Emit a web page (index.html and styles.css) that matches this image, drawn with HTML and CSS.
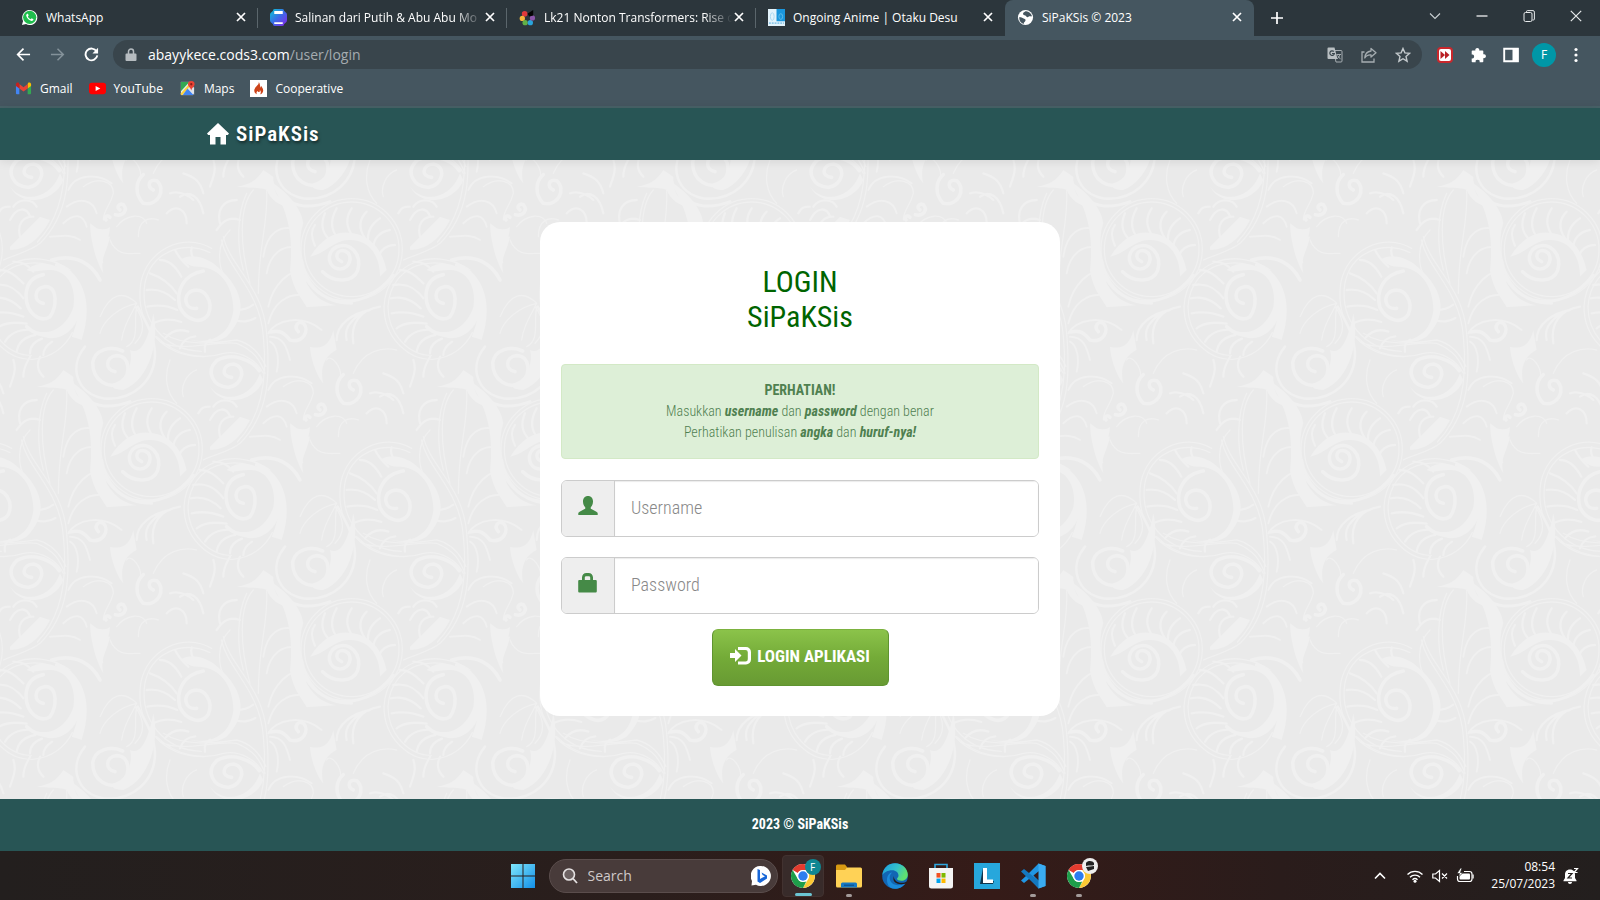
FILE: index.html
```html
<!DOCTYPE html>
<html lang="id">
<head>
<meta charset="utf-8">
<title>SiPaKSis © 2023</title>
<meta name="viewport" content="width=device-width, initial-scale=1">
<link rel="stylesheet" href="styles.css">
</head>
<body>
<svg class="defs" width="0" height="0" aria-hidden="true">
  <defs>
    <symbol id="i-x" viewBox="0 0 10 10"><path d="M1 1l8 8M9 1l-8 8" fill="none" stroke="currentColor" stroke-width="1.7"/></symbol>
    <symbol id="i-chrome" viewBox="0 0 48 48">
      <circle cx="24" cy="24" r="22" fill="#fff"/>
      <path d="M24 2a22 22 0 0 1 19 11H24a11 11 0 0 0-9.500 5.500L4.900 13A22 22 0 0 1 24 2z" fill="#e33b2e"/>
      <path d="M43 13a22 22 0 0 1-19 33l9.500-16.500A11 11 0 0 0 33.500 18.500L30 13z" fill="#fcc934"/>
      <path d="M24 46A22 22 0 0 1 4.900 13l9.600 16.500A11 11 0 0 0 24 35l6-1z" fill="#1e9e4a"/>
      <circle cx="24" cy="24" r="11" fill="#fff"/><circle cx="24" cy="24" r="8.700" fill="#2d7df0"/>
    </symbol>
    <!-- One repeat of the damask, drawn at three times its printed size -->
    <g id="motif" fill="none" stroke="#f0f0f0" stroke-linecap="round" stroke-linejoin="round">
      <g fill="#f0f0f0" stroke="none">
        <path d="M1195 60c50 30 100 80 105 130-20 60 0 120 10 180 30 50 60 60 90 66l-90 6c-16-30-40-50-50-110 10-90 0-180-65-272z"/>
        <path d="M120 560c40 10 60-10 70-50l10 60c-40 20-50 60-40 100-20-20-40-80-40-110zM500 680c40-6 60-20 80-50l30 20c0 60 20 70 70 90-40 10-80-20-90-50-20-10-60-4-90-10zM70 800c20 10 40 10 50 0 0 40-30 70-20 110-20 0-30-70-30-110zM660 190c30 20 40 40 60 40-10 50-30 60-20 110-20-30-40-100-40-150z"/>
        <path d="M545 300c90 30 130 120 90 240l-30-10c40-90 20-170-60-230zM780 570c40 20 60-60 70-110 20 80-10 200-90 230-30 0-40-10-30-20 40-10 60-60 50-100z"/>
        <path d="M930 300c30-20 70-10 100 10 90 70 110 150 40 220-30 20-70 20-110 10 60 10 120-10 130-90 0-60-30-130-110-130-20 0-30-10-50-20zM470 330c30-30 80-20 110 0 40 20 60 90 50 130-20 70-90 100-140 50 50 20 100-10 120-70 10-60-20-110-70-110-30 0-50 10-70 0z"/>
        <path d="M120 290c40-60 80-80 130-70 60 10 90 60 100 110l-20 20c0-60-30-110-90-110-50 0-70 40-120 50zM1020 680c40 50 120 40 150-40l10 20c-20 60-120 90-160 20zM1020 860c30-30 60-60 90-90l30 10c-20 40-60 90-120 90z"/>
      </g>
      <g stroke-width="4">
        <circle cx="245" cy="268" r="152"/><circle cx="245" cy="268" r="142"/>
        <path d="M600 330C500 260 350 300 342 440c0 90 70 160 145 158 60-4 100-40 120-80M590 340C500 276 362 310 354 440c0 80 60 146 130 146"/>
        <path d="M1025 265C940 215 830 270 812 370c-17 130 68 220 188 220M1020 278c-80-40-180 0-196 96-14 110 60 196 170 200"/>
        <path d="M860 530c60 60 140 70 200 50 50-10 100 20 120 60M870 545c60 35 170-5 230 5 50 20 70 50 85 90M880 520c60 40 150 30 220 20 40 10 70 40 88 80"/>
        <path d="M1150 90c-45 50-40 170-10 280M1190 90c5 110-25 160-25 310M1080 210c-40 40-40 110-10 150M1130 100c-30 60-30 160-10 230"/>
        <path d="M800 430c-40-40-80-30-110 40M800 430c-50 10-100 50-110 90M800 430c-20 40-40 70-45 110M800 440c-10 50 10 100-30 120M795 440c30 40 30 80 0 110"/>
        <path d="M250 640c30-70 90-80 130-70M205 830c0-50 30-60 60-50M210 660c10-40-30-80-40-60M640 80c40-30 90-20 90 20-10 40-30 50-30 80M740 200c30-40 80-40 90-10M720 240c20 50 60 40 90 40M900 600c-20 50-10 100 20 130M980 630c-30 10-50 50-40 80"/>
      </g>
      <g stroke-width="6">
        <path d="M1060 230c20 90 120 150 130 290 10 120 10 240-80 330-30 25-80 35-110 50M1054 240c20 90 116 150 126 290 10 100 6 230-78 316" stroke-width="4"/>
        <path d="M1180 290c10-70 50-100 105-80M1190 340c10-60 50-90 100-75M1195 440c15-70 65-110 105-110M1195 490c15-60 55-90 105-85M1195 520c20-40 100-60 160-10M1200 530c40 0 50 30 60 70M1200 545c20 10 30 50 20 90M1195 690c20-50 90-50 130-20M1190 740c40-30 80-20 90 20M1180 790c30-30 60-30 70 10M1140 830c30 0 60-10 90 10"/>
      </g>
      <g stroke-width="11">
        <path d="M215 305c-25-10-15-40 10-32 28 12 14 55-16 54-36-2-42-50-10-66 40-18 78 20 64 70-14 36-70 40-105 4"/>
        <path d="M520 430c-30-4-30-46 5-50 40-2 35 62 15 90-30 20-70-10-72-60 0-40 20-60 52-66"/>
        <path d="M735 635c-30-5-30-45 5-48 40 0 44 55 15 80-40 24-88-6-87-60 7-36 50-52 90-34"/>
        <path d="M980 445c-36 6-44-40-15-52 40-12 66 32 50 70-20 32-66 18-85-20-14-50 10-100 70-110"/>
        <path d="M1085 652c-34-2-28-38 5-40 40 6 30 64-15 70-45-2-70-46-35-80 46-26 104-4 128 30"/>
        <path d="M1285 515c-15-15 0-35 15-25 20 20 0 60-40 50-20-24-30-30-60-24"/>
        <path d="M250 690c-20-10-15-35 10-28 30 26 4 78-40 68-30-30-20-70 0-86M150 750c-12-6-4-22 10-16 14 16 0 36-24 30M108 780c-8-8 4-18 12-8"/>
        <path d="M645 560c-50 60-25 140 55 155 90 10 155-55 155-135-2-50-24-90-52-140" stroke-width="8"/>
        <path d="M600 650c20 70 90 110 180 75M105 350c55 100 185 100 265-5M95 300c10 70 60 130 150 130" stroke-width="9"/>
        <path d="M470 500c50 50 130 20 150-50 15-60-25-120-60-135M545 300c70-20 120 10 145 60"/>
        <path d="M330 440c-60 10-90 50-80 110M300 450c-50 10-100 40-100 90M270 460c-20 20-50 40-40 80" stroke-width="7"/>
      </g>
      <!-- feathering inside the scrolls -->
      <g stroke-width="7">
        <path d="M165 160c-15 35-5 60 10 75M200 145c-20 35-15 65 0 85M245 145c-20 30-15 60 5 85M290 155c-25 25-25 50-5 80M330 175c-30 20-40 45-35 75M360 210c-30 5-50 25-50 55M375 255c-25 0-45 15-50 40M135 195c-15 20-10 40 0 62"/>
        <path d="M390 330c30 0 50 20 70 40M370 375c30-5 60 0 90 40M362 415c30-6 60 0 90 30M365 460c30-6 60-4 95 10M380 505c20-16 50-20 90-14M405 545c14-24 40-36 75-36M440 575c4-24 20-44 56-50M480 580c0-20 14-36 36-44M430 305c30 0 50 16 60 30M520 585c0-16 10-30 26-40"/>
        <path d="M840 340c30 10 60 30 80 60M830 390c30-4 60 6 85 30M832 440c30-6 60-4 90 10M850 490c26-14 54-14 84-4M885 535c16-20 40-30 70-20M930 565c8-22 20-34 46-36M870 300c30 0 50 24 64 50M915 270c10 20 24 36 40 50M965 262c-6 20 4 34 16 44M1005 575c-4-20 4-30 16-36M1100 450c20 0 34-4 50-16M1096 480c20 8 44 4 60-6"/>
        <path d="M450 790c-10-40 10-70 50-70M440 810c20-30 40-40 70-30M330 710c30-20 60 0 70 50M300 700c30-10 60 10 70 20M290 760c30-30 60-10 60 30M400 700c-10-40-30-50-60-60M420 680c10-30 20-50 10-80M460 650c0-30 10-40 20-60M520 650c-20-20-20-40-10-60M1030 740c20-30 60-20 70 0M1020 780c20-40 50-40 60-10M1050 830c-10-40 10-60 40-60M985 760c10-20 20-20 34-20"/>
      </g>
    </g>
    <pattern id="damask" width="400" height="400" patternUnits="userSpaceOnUse">
      <rect width="400" height="400" fill="#eaeaea"/>
      <g transform="translate(270) scale(.3333)">
        <use href="#motif" x="-1200" y="-1200"/><use href="#motif" y="-1200"/>
        <use href="#motif" x="-1800" y="-600"/><use href="#motif" x="-600" y="-600"/>
        <use href="#motif" x="-1200"/><use href="#motif"/>
        <use href="#motif" x="-1800" y="600"/><use href="#motif" x="-600" y="600"/>
      </g>
    </pattern>
  </defs>
</svg>

<header class="browser">
  <div class="tabs">
    <div class="tab">
      <svg class="fav" viewBox="0 0 18 18"><path d="M1 17l1.200-4.200A8 8 0 1 1 5.300 16z" fill="#fff"/><circle cx="9.200" cy="8.800" r="7" fill="#1fbd4d"/><path d="M6.500 5c-.8.400-1.200 1.400-.9 2.400.8 2.600 3 4.600 5.600 5.200 1 .1 2-.7 2-1.700l-1.900-1-1 1c-1.400-.5-2.500-1.600-3-2.900l.8-1-.7-1.900z" fill="#fff"/></svg>
      <button class="tab-title">WhatsApp</button>
      <button class="tab-x" aria-label="Close tab"><svg><use href="#i-x"/></svg></button>
    </div>
    <div class="tab">
      <svg class="fav" viewBox="0 0 18 18"><defs><linearGradient id="gp" x1="0" y1="0" x2="1" y2="1"><stop offset="0" stop-color="#06c8d2"/><stop offset=".5" stop-color="#3c6ae8"/><stop offset="1" stop-color="#8a22e8"/></linearGradient></defs><path d="M5 0h8a2 2 0 0 1 2 2l1.500 1.500A3 3 0 0 1 18 6v6a3 3 0 0 1-1.500 2.500L15 16a2 2 0 0 1-2 2H5a2 2 0 0 1-2-2l-1.500-1.500A3 3 0 0 1 0 12V6a3 3 0 0 1 1.500-2.500L3 2a2 2 0 0 1 2-2z" fill="url(#gp)"/><path d="M4.500 2h9v3.200h-9zM4.500 14h9v2h-9z" fill="#fff"/></svg>
      <button class="tab-title fade">Salinan dari Putih &amp; Abu Abu Mo</button>
      <button class="tab-x" aria-label="Close tab"><svg><use href="#i-x"/></svg></button>
    </div>
    <div class="tab">
      <svg class="fav" viewBox="0 0 18 18"><circle cx="6" cy="5" r="3" fill="#e0393b"/><circle cx="3.500" cy="10" r="2.800" fill="#f4b63c"/><circle cx="6.500" cy="14.500" r="2.800" fill="#62b146"/><circle cx="12" cy="14.500" r="2.800" fill="#2aa5dd"/><circle cx="14.200" cy="9.500" r="2.800" fill="#8a56a8"/><path d="M9 5l6-4v6l-4 1z" fill="#050505"/><circle cx="9.300" cy="9.500" r="1.800" fill="#2c363c"/></svg>
      <button class="tab-title fade">Lk21 Nonton Transformers: Rise o</button>
      <button class="tab-x" aria-label="Close tab"><svg><use href="#i-x"/></svg></button>
    </div>
    <div class="tab last">
      <svg class="fav" viewBox="0 0 18 18"><path d="M0 0h18v18H0z" fill="#e3f3fb"/><path d="M9 0h9v13H9z" fill="#1a96dc"/><path d="M1 15h16" stroke="#8fc9ea" stroke-width="2" stroke-dasharray="2 1"/><g fill="none" stroke-width="1"><ellipse cx="4.500" cy="8" rx="2" ry="4" stroke="#a9d9f1"/><ellipse cx="13.500" cy="8" rx="2" ry="3" stroke="#5fbcea"/></g></svg>
      <button class="tab-title">Ongoing Anime | Otaku Desu</button>
      <button class="tab-x" aria-label="Close tab"><svg><use href="#i-x"/></svg></button>
    </div>
    <div class="tab active">
      <svg class="fav" viewBox="0 0 18 18"><circle cx="9" cy="9" r="8" fill="#fff"/><path d="M2.500 8.500c2 0 3 1 4.500 1.500 2 .6 2.500 1.500 1.800 2.800-.6 1.200-1.800 1.200-1.600 3C4 15 2 12 2.500 8.500zM9 2.500c-1.500 1-3 1.500-2.500 3C7 7 9 6 9.500 7.500s2 1.500 3 .5 2.500.5 3.300-.5C15 4.500 12 2 9 2.500z" fill="#45555f"/></svg>
      <button class="tab-title">SiPaKSis © 2023</button>
      <button class="tab-x" aria-label="Close tab"><svg><use href="#i-x"/></svg></button>
    </div>
    <button class="newtab" aria-label="New tab"><svg viewBox="0 0 14 14"><path d="M7 0v14M0 7h14" stroke="#fff" stroke-width="2"/></svg></button>
    <div class="winbtns">
      <button aria-label="Search tabs"><svg viewBox="0 0 12 12"><path d="M1 3.500l5 5 5-5" fill="none" stroke="#ccd2d5" stroke-width="1.100"/></svg></button>
      <button aria-label="Minimize"><svg viewBox="0 0 12 12"><path d="M.5 6h11" stroke="#fff" stroke-width="1.200"/></svg></button>
      <button aria-label="Restore"><svg viewBox="0 0 12 12"><rect x="1" y="2.500" width="8" height="9" rx="1.500" fill="none" stroke="#e8ebec"/><path d="M3.500 2V1.500A1 1 0 0 1 4.500.6H10a1.500 1.500 0 0 1 1.400 1.500V9a1 1 0 0 1-1 1H9.500" fill="none" stroke="#e8ebec"/></svg></button>
      <button aria-label="Close"><svg viewBox="0 0 12 12"><path d="M.8.8l10.400 10.400M11.200.8L.8 11.200" stroke="#e8ebec" stroke-width="1.200"/></svg></button>
    </div>
  </div>

  <div class="toolbar">
    <button class="tool" aria-label="Back"><svg viewBox="0 0 16 16"><path d="M15 8H2M8 1.800L1.800 8 8 14.200" fill="none" stroke="#fff" stroke-width="1.800"/></svg></button>
    <button class="tool" aria-label="Forward"><svg viewBox="0 0 16 16"><path d="M1 8h13M8 1.800L14.200 8 8 14.200" fill="none" stroke="#84929a" stroke-width="1.600"/></svg></button>
    <button class="tool" aria-label="Reload"><svg viewBox="0 0 16 16"><path d="M13.400 4.700A6.300 6.300 0 1 0 14.200 9" fill="none" stroke="#fff" stroke-width="2"/><path d="M15 .8v6H9z" fill="#fff"/></svg></button>
    <form class="omnibox">
      <svg class="lock" viewBox="0 0 12 14"><path d="M1.500 5.500h9a1 1 0 0 1 1 1V12a1 1 0 0 1-1 1h-9a1 1 0 0 1-1-1V6.500a1 1 0 0 1 1-1z" fill="#b6bcc0"/><path d="M3.500 6V3.500a2.500 2.500 0 0 1 5 0V6" fill="none" stroke="#b6bcc0" stroke-width="1.500"/></svg>
      <span class="url">abayykece.cods3.com<span>/user/login</span></span>
      <button type="button" aria-label="Translate"><svg viewBox="0 0 16 16"><path d="M6.500 3.500h7.500a1 1 0 0 1 1 1V14a1 1 0 0 1-1 1H9z" fill="none" stroke="#a6adb1"/><path d="M1.500.5h6L10.500 12h-9a1 1 0 0 1-1-1V1.500a1 1 0 0 1 1-1z" fill="#b9bfc2"/><path d="M6.800 4.500A2.300 2.300 0 1 0 7.400 6.500H5" fill="none" stroke="#3a464d" stroke-width="1.200"/><path d="M9.500 7.500H14M12.800 7.500c-.4 2-1.500 3.500-3 4.500M10.500 8.500l3 3.700" fill="none" stroke="#a6adb1"/></svg></button>
      <button type="button" aria-label="Share"><svg viewBox="0 0 16 16"><path d="M3.500 5H1v10h12v-3.500" fill="none" stroke="#a6adb1" stroke-width="1.300"/><path d="M10 1.500l5 4.300-5 4.200V7.800C7 7.600 5 8.600 3.800 11 4 7.500 6 4.500 10 4z" fill="none" stroke="#a6adb1" stroke-width="1.300" stroke-linejoin="round"/></svg></button>
      <button type="button" aria-label="Bookmark"><svg viewBox="0 0 16 16"><path d="M8 1.500l1.900 4.400 4.800.4L11 9.500l1.100 4.700L8 11.700l-4.100 2.500L5 9.500 1.300 6.300l4.800-.4z" fill="none" stroke="#c3c9cc" stroke-width="1.400"/></svg></button>
    </form>
    <button class="ext" aria-label="Video speed extension"><svg viewBox="0 0 16 16"><rect x="1" y="1" width="14" height="14" rx="3" fill="#fff" stroke="#c9272c" stroke-width="2"/><path d="M3.500 4v8l4.500-4zM8 4v8l4.500-4z" fill="#b91f24"/></svg></button>
    <button class="ext" aria-label="Extensions"><svg viewBox="0 0 16 16"><path d="M2.500 3.500H5.400a2 2 0 1 1 3.800 0h3.300a.8.800 0 0 1 .8.800v3a2 2 0 1 1 0 3.800v3.400a.8.800 0 0 1-.8.800H9.600a2 2 0 1 0-3.900 0H2.500a.8.800 0 0 1-.8-.8v-3a2 2 0 1 0 0-3.900V4.300a.8.800 0 0 1 .8-.8z" fill="#fff"/></svg></button>
    <button class="ext" aria-label="Side panel"><svg viewBox="0 0 16 16"><path d="M1.200 1.700h13.600v12.600H1.200z" fill="none" stroke="#fff" stroke-width="1.900"/><path d="M9.500 1h6v14h-6z" fill="#fff"/></svg></button>
    <button class="avatar">F</button>
    <button class="ext menu" aria-label="Menu"><svg viewBox="0 0 16 16"><g fill="#fff"><circle cx="8" cy="2.500" r="1.600"/><circle cx="8" cy="8" r="1.600"/><circle cx="8" cy="13.500" r="1.600"/></g></svg></button>
  </div>

  <nav class="bookmarks">
    <a href="#"><svg class="fav" viewBox="0 0 18 18"><path d="M1 4.500v9.500a1 1 0 0 0 1 1h2.600V8z" fill="#4285f4"/><path d="M17 4.500v9.500a1 1 0 0 1-1 1h-2.600V8z" fill="#34a853"/><path d="M13.400 4.300V9L17 6.300V4.500c0-1.800-2-2.300-3-1.500z" fill="#fbbc04"/><path d="M4.600 9V4.300L9 7.600l4.400-3.300V9L9 12.300z" fill="#ea4335"/><path d="M1 4.500v1.800L4.600 9V4.300L4 3C3 2.200 1 2.700 1 4.500z" fill="#c5221f"/></svg>Gmail</a>
    <a href="#"><svg class="fav" viewBox="0 0 18 18"><rect x="0" y="3" width="18" height="12" rx="3" fill="#f00"/><path d="M7 6.300v5.400L12 9z" fill="#fff"/></svg>YouTube</a>
    <a href="#"><svg class="fav" viewBox="0 0 18 18"><path d="M2 2h13v14H2z" fill="#e9ecef"/><path d="M2 2h9L2 12z" fill="#34a853"/><path d="M2 14l9-10 2 2-9.500 10H2z" fill="#fbd13d"/><path d="M9 9l6.500 7H4z" fill="#4285f4"/><path d="M9.500 9L16 15.500V8l-4-2z" fill="#dfe3e8"/><path d="M13 1a3.500 3.500 0 0 1 3.500 3.500C16.500 7 13.600 8 13 11c-.6-3-3.500-4-3.500-6.500A3.500 3.500 0 0 1 13 1z" fill="#ea4335"/><circle cx="13" cy="4.500" r="1.200" fill="#8c1d18"/></svg>Maps</a>
    <a href="#"><svg class="fav" viewBox="0 0 18 18"><path d="M0 0h18v18H0z" fill="#fff"/><path d="M9.200 2.500c.8 3-4.700 4.800-4.700 8.600 0 2.200 1.300 3.600 3 4.100-1-1.300-.8-2.700.5-3.500.4 1 1 1.200 1.900.9.700-.4.700-1.200.3-2 1.500.8 1.800 3.200.4 4.600 2-.5 3.400-2.200 3.400-4.200 0-2.200-1.600-3-1.800-4.700-.6.500-.7 1.200-.5 1.900C10.400 7.400 11 4 9.200 2.500z" fill="#cc4319"/></svg>Cooperative</a>
  </nav>
</header>

<div class="navbar">
  <a class="brand" href="#"><svg viewBox="0 0 24 24"><path d="M12 1l11 10.500-1.200 1.500H20v9.500h-5.500V15h-5v7.500H4V13H2.200L1 11.500z" fill="#fff"/></svg>SiPaKSis</a>
</div>

<main class="page">
  <svg class="wall" width="100%" height="100%" aria-hidden="true"><rect width="100%" height="100%" fill="url(#damask)"/></svg>
  <section class="card">
    <h1>LOGIN<br>SiPaKSis</h1>
    <div class="notice">
      <strong>PERHATIAN!</strong><br>
      Masukkan <b><i>username</i></b> dan <b><i>password</i></b> dengan benar<br>
      Perhatikan penulisan <b><i>angka</i></b> dan <b><i>huruf-nya!</i></b>
    </div>
    <form class="login">
      <div class="group">
        <label for="user" aria-label="Username"><svg viewBox="0 0 20 20"><path d="M10 0c3 0 5 2.200 5 5.500 0 2.500-.9 4.300-2 5.500-.6.700-.4 1.700.4 2.100l5 2.600c.9.500 1.300 1 1.300 1.800V19H.3v-1.500c0-.8.400-1.300 1.300-1.800l5-2.600c.8-.4 1-1.400.4-2.100-1.100-1.200-2-3-2-5.500C5 2.200 7 0 10 0z"/></svg></label>
        <input id="user" type="text" placeholder="Username">
      </div>
      <div class="group">
        <label for="pass" aria-label="Password"><svg viewBox="0 0 20 20"><path d="M1.500 7H4V4.500C4 2 5.800 0 8.500 0h2C13.200 0 15 2 15 4.500V7h2.500c.8 0 1.300.5 1.300 1.300v10c0 .8-.5 1.200-1.300 1.200h-16c-.8 0-1.300-.4-1.300-1.200v-10C.2 7.500.7 7 1.500 7zm5.300 0h5.400V4.700c0-.8-.5-1.400-1.400-1.400H8.200c-.9 0-1.400.6-1.400 1.400z"/></svg></label>
        <input id="pass" type="password" placeholder="Password">
      </div>
      <button class="submit" type="button"><svg viewBox="0 0 21 20"><path d="M0 7h5V3l6.500 6.500L5 16v-4H0z"/><path d="M8 1h8a5 5 0 0 1 5 5v7.500a5 5 0 0 1-5 5H8v-3h7.500a2.300 2.300 0 0 0 2.300-2.300V6.300A2.300 2.300 0 0 0 15.500 4H8z"/></svg>LOGIN APLIKASI</button>
    </form>
  </section>
</main>

<footer class="foot">2023 © SiPaKSis</footer>

<div class="taskbar">
  <div class="spacer"></div>
  <div class="apps">
    <button class="start" aria-label="Start"><svg viewBox="0 0 24 24"><defs><linearGradient id="gw" gradientUnits="userSpaceOnUse" x1="0" y1="0" x2="24" y2="24"><stop offset="0" stop-color="#7fe6fb"/><stop offset="1" stop-color="#128fe8"/></linearGradient></defs><path d="M0 0h11.500v11.500H0zM12.500 0H24v11.500H12.500zM0 12.500h11.500V24H0zM12.500 12.500H24V24H12.500z" fill="url(#gw)"/></svg></button>
    <div class="search">
      <svg class="lens" viewBox="0 0 16 16"><circle cx="7" cy="6.500" r="5.500" fill="#6d6262" stroke="#e6e2e2" stroke-width="1.600"/><path d="M11 10.500l4 4.500" stroke="#e6e2e2" stroke-width="1.800"/></svg>
      <input type="text" placeholder="Search" aria-label="Search">
      <svg class="bing" viewBox="0 0 20 20"><path d="M10 0a10 10 0 1 1-5 18.700L.5 19.500 1 15A10 10 0 0 1 10 0z" fill="#fff"/><path d="M6.500 3l2.500 1v9l5-2.800-2.400-1.200L10.500 6.500 16 9.500v3L9 17l-2.500-1.500z" fill="#1766d8"/></svg>
    </div>
    <button class="app current" aria-label="Chrome"><svg viewBox="0 0 48 48"><use href="#i-chrome"/></svg><span class="badge">F</span></button>
    <button class="app run" aria-label="File Explorer"><svg viewBox="0 0 26 26"><path d="M0 3a1.500 1.500 0 0 1 1.500-1.500H9L11 4v5H0z" fill="#d99a12"/><path d="M0 7h9l2-2.500h13.500A1.500 1.500 0 0 1 26 6v17a1.500 1.500 0 0 1-1.500 1.500h-23A1.500 1.500 0 0 1 0 23z" fill="#ffd256"/><path d="M5 24.500V21a1.500 1.500 0 0 1 1.500-1.500h13A1.500 1.500 0 0 1 21 21v3.500z" fill="#1679c4"/><path d="M8 21.500h10v1.500H8z" fill="#0d5796"/></svg></button>
    <button class="app" aria-label="Edge"><svg viewBox="0 0 26 26"><defs><linearGradient id="ge" x1="0" y1="0" x2="1" y2=".4"><stop offset="0" stop-color="#1b9de2"/><stop offset=".6" stop-color="#35c1c8"/><stop offset="1" stop-color="#5fe070"/></linearGradient></defs><circle cx="13" cy="13" r="12.800" fill="#1266b4"/><path d="M.3 12C1.500 4 7 .2 13 .2 20.500.2 25.800 6 25.800 11.500c0 4-3 6.300-6.500 6.300-2.500 0-4.300-.9-4.300-2 0-.8 1.500-1.300 1.500-3.300 0-3-2.700-5.300-6.300-5.300C5.500 7.200 1.800 9.500.3 12z" fill="url(#ge)"/><path d="M10 9.500c-5 5-1.500 12.500 6 12.800 3 0 5.500-1 7.500-2.300C21 24 17 25.800 13 25.800 7 25.800 5 21 5 17c0-4 2-7 5-7.500z" fill="#1b8bdc"/><path d="M12 13c-.5 4 3 7 8 6.800 2-.1 3.500-.6 5-1.400l-1 2C18 22.500 9 20.500 12 13z" fill="#231a1a"/></svg></button>
    <button class="app" aria-label="Microsoft Store"><svg viewBox="0 0 26 26"><path d="M7 6V1.500h12V6" fill="none" stroke="#2fa7df" stroke-width="1.600"/><path d="M1 5h24v18a2.500 2.500 0 0 1-2.500 2.500h-19A2.500 2.500 0 0 1 1 23z" fill="#f4f4f4"/><path d="M8.500 10h4v4.600h-4z" fill="#f25022"/><path d="M13.500 10h4v4.600h-4z" fill="#7fba00"/><path d="M8.500 15.600h4V20h-4z" fill="#00a4ef"/><path d="M13.500 15.600h4V20h-4z" fill="#ffb900"/></svg></button>
    <button class="app" aria-label="L app"><svg viewBox="0 0 26 26"><path d="M0 0h26v26H0z" fill="#27a7dc"/><path d="M6 21L9 5v13h11l-1 3z" fill="#12354b"/><path d="M9 5h4v11.500h6V20H9z" fill="#fff"/></svg></button>
    <button class="app run" aria-label="Visual Studio Code"><svg viewBox="0 0 26 26"><path d="M18.500.5L25.500 3v20l-7 2.500L9 15l3-4 7 7V8L4 20l-3-2.500L6 13z" fill="#2196e3"/><path d="M1 8.500L4 6l15 12v7.500z" fill="#1478bf"/><path d="M18.500.5L25.500 3v20l-7 2.500z" fill="#3aacf2"/></svg></button>
    <button class="app run" aria-label="Chrome profile"><svg viewBox="0 0 48 48"><use href="#i-chrome"/></svg><span class="badge photo"><svg viewBox="0 0 16 16"><path d="M4 5c2-3 7-2 8 0v2c-2 1-5 0-8 1zM4 9l8-1v3l-6 2z" fill="#222"/></svg></span></button>
  </div>
  <div class="tray">
    <svg class="ic" viewBox="0 0 16 16"><path d="M3 10.500l5-5 5 5" fill="none" stroke="#fff" stroke-width="1.600"/></svg>
    <svg class="ic wifi" viewBox="0 0 18 16"><g fill="none" stroke="#fff" stroke-width="1.400"><path d="M1.500 6.500a10.500 10.500 0 0 1 15 0M4 9.200a7 7 0 0 1 10 0M6.500 11.800a3.600 3.600 0 0 1 5 0"/></g><circle cx="9" cy="13.300" r="1.500" fill="#fff"/></svg>
    <svg class="ic" viewBox="0 0 16 16"><path d="M.8 6v4h2.700L7.500 13.500v-11L3.500 6zM10 5.500l5 5M15 5.500l-5 5" fill="none" stroke="#fff" stroke-width="1.200"/></svg>
    <svg class="ic batt" viewBox="0 0 18 16"><rect x="3.500" y="5.500" width="10.500" height="6" rx="1" fill="#fff"/><path d="M1.500 8v3a2.500 2.500 0 0 0 2.500 2.500h9.500A2.500 2.500 0 0 0 16 11V6a2.500 2.500 0 0 0-2.500-2.500H8" fill="none" stroke="#fff" stroke-width="1.200"/><path d="M16.500 6.500h1.200v4h-1.200z" fill="#fff"/><path d="M4.500 0L1 5.500h2.500L2.500 9 7 4.500H4.500L6 0z" fill="#fff" stroke="#231f1e" stroke-width=".7"/></svg>
    <div class="clock">08:54<br>25/07/2023</div>
    <svg class="ic bell" viewBox="0 0 16 18"><path d="M7 2.500c3.500 0 5 2.500 5 5v3.500l1.500 2.500v.8H.5v-.8L2 11V7.500c0-2.500 1.500-5 5-5zM5 15h4c0 1.300-.8 2-2 2s-2-.7-2-2z" fill="#fff"/><path d="M5 6.500h4l-4 4.500h4" fill="none" stroke="#231f1e" stroke-width="1.200"/><path d="M11 1.500h3.500L11 5.500h3.500" fill="none" stroke="#fff" stroke-width="1.200"/></svg>
  </div>
</div>
</body>
</html>
```
FILE: styles.css
```css
* { box-sizing: border-box; }

body {
  margin: 0;
  min-height: 100vh;
  display: flex;
  flex-direction: column;
  font-family: "Roboto Condensed", Roboto, sans-serif;
  font-size: 16px;
  background: #ececec;
}

button {
  border: 0;
  padding: 0;
  background: none;
  color: inherit;
  font: inherit;
}

svg { display: block; flex: none; }
.defs { position: absolute; }

/* Browser chrome */
.browser {
  font-family: "Open Sans", "Noto Sans", sans-serif;
  font-size: 12px;
  color: #fff;
  background: #455660;
  border-bottom: 2px solid #486268;
}

.tabs {
  display: flex;
  align-items: stretch;
  height: 36px;
  padding-left: 9px;
  background: #2c363c;
}

.tab {
  display: flex;
  align-items: center;
  gap: 8px;
  flex: 0 1 249px;
  min-width: 0;
  padding: 0 12px 2px;
  background: linear-gradient(#5b666c, #5b666c) right center / 1px 20px no-repeat;
}
.tab.last { background: none; }
.tab.active {
  background: #455660;
  border-radius: 8px 8px 0 0;
}

.fav { width: 17px; height: 17px; }
.tab-title {
  flex: 1;
  min-width: 0;
  margin-right: -6px;
  overflow: hidden;
  white-space: nowrap;
  text-align: left;
}
.fade {
  -webkit-mask-image: linear-gradient(90deg, #000 85%, transparent);
  mask-image: linear-gradient(90deg, #000 85%, transparent);
}
.tab-x svg { width: 10px; height: 10px; }

.newtab { width: 46px; }
.newtab svg { width: 12px; height: 12px; margin: auto; }

.winbtns { display: flex; margin: 0 1px 0 auto; }
.winbtns button { width: 47px; padding-bottom: 4px; }
.winbtns svg { width: 12px; height: 12px; margin: auto; }

.toolbar {
  display: flex;
  align-items: center;
  height: 37px;
  padding: 0 9px 0 6px;
}
.tool { width: 34px; }
.tool svg { width: 15px; height: 15px; margin: auto; }

.omnibox {
  display: flex;
  align-items: center;
  flex: 1;
  height: 29px;
  margin: 0 6px 0 5px;
  padding: 0 2px 0 12px;
  border-radius: 15px;
  background: #39454c;
}
.lock { width: 12px; height: 14px; }
.url { flex: 1; margin-left: 11px; font-size: 14px; }
.url span { color: #a5acb0; }
.omnibox button { width: 34px; }
.omnibox button svg { width: 16px; height: 16px; margin: auto; }

.ext { width: 33px; }
.ext svg { width: 16px; height: 16px; margin: auto; }
.ext.menu { width: 30px; }
.avatar {
  width: 24px;
  height: 24px;
  margin: 0 5px;
  border-radius: 50%;
  background: #0097a7;
}

.bookmarks {
  display: flex;
  align-items: center;
  gap: 16px;
  height: 33px;
  padding: 0 15px 3px;
}
.bookmarks a {
  display: flex;
  align-items: center;
  gap: 8px;
  color: #fff;
  text-decoration: none;
}

/* Site */
.navbar {
  display: flex;
  align-items: center;
  height: 52px;
  padding-left: 206px;
  background: #285555;
  position: relative;
  z-index: 1;
  box-shadow: 0 1px 10px rgba(0, 0, 0, .1);
}
.brand {
  display: flex;
  align-items: center;
  gap: 6px;
  color: #fff;
  font-size: 21px;
  font-weight: 600;
  letter-spacing: 1px;
  text-decoration: none;
  text-shadow: 1px 2px 3px rgba(0, 0, 0, .5);
}
.brand svg { width: 24px; height: 24px; }

.page {
  flex: 1;
  position: relative;
  padding: 62px 16px;
}
.wall { position: absolute; inset: 0; }

.card {
  position: relative;
  max-width: 520px;
  margin: 0 auto;
  padding: 42px 21px 30px;
  border-radius: 20px;
  background: #fff;
  text-align: center;
}
.card h1 {
  margin: 0 0 30px;
  color: #006400;
  font-size: 30px;
  font-weight: normal;
  line-height: 35px;
}

.notice {
  padding: 15px;
  border: 1px solid #d3e9c6;
  border-radius: 4px;
  background: #ddefd7;
  color: #4f8050;
  font-size: 14px;
  font-weight: 300;
  line-height: 21px;
}
.notice strong,
.notice b { font-weight: 700; }

.login {
  display: flex;
  flex-direction: column;
  align-items: center;
  margin-top: 21px;
}
.group {
  display: flex;
  align-self: stretch;
  height: 57px;
  border: 1px solid #ccc;
  border-radius: 6px;
  overflow: hidden;
}
.group + .group { margin-top: 20px; }
.group label {
  width: 53px;
  padding: 15px 16px;
  border-right: 1px solid #ccc;
  background: #eee;
}
.group label svg { width: 20px; height: 20px; fill: #458a47; }
.group input {
  flex: 1;
  min-width: 0;
  border: 0;
  padding: 0 16px 2px;
  background: #fff;
  box-shadow: inset 0 1px 1px rgba(0, 0, 0, .08);
  font: inherit;
  font-size: 18px;
  font-weight: 300;
}
.group input::placeholder { color: #888; }

.submit {
  display: flex;
  align-items: center;
  justify-content: center;
  gap: 6px;
  min-width: 177px;
  height: 57px;
  margin-top: 15px;
  padding-bottom: 4px;
  border: 1px solid #5f9430;
  border-top-color: #7cb23f;
  border-radius: 6px;
  background: linear-gradient(#8bc34a, #74ab38 50%, #689a33);
  color: #fff;
  font-size: 17px;
  font-weight: bold;
}
.submit svg { width: 21px; height: 20px; fill: #fff; }

.foot {
  display: flex;
  align-items: center;
  justify-content: center;
  height: 52px;
  padding-bottom: 2px;
  background: #285555;
  color: #fff;
  font-size: 14px;
  font-weight: bold;
}

/* Desktop taskbar */
.taskbar {
  display: flex;
  height: 49px;
  background: linear-gradient(90deg, #231f1e, #2a1e1c 40%, #351b18 62%, #2a1c1b 80%, #231f1e);
  color: #fff;
  font-family: "Open Sans", "Noto Sans", sans-serif;
  font-size: 12px;
}
.spacer { flex: 1; padding-left: 35px; }
.apps { display: flex; align-items: center; }
.start svg { width: 24px; height: 24px; }
.search {
  display: flex;
  align-items: center;
  width: 229px;
  height: 34px;
  margin: 0 4px 0 14px;
  padding: 0 6px 0 12px;
  border: 1px solid #5a4d4c;
  border-radius: 17px;
  background: #483b3a;
}
.lens { width: 16px; height: 16px; }
.search input {
  flex: 1;
  min-width: 0;
  padding: 0 0 0 10px;
  border: 0;
  background: none;
  color: #fff;
  font: inherit;
  font-size: 14px;
}
.search input::placeholder { color: #cfc9c9; }
.bing { width: 20px; height: 20px; }

.app {
  position: relative;
  display: flex;
  align-items: center;
  justify-content: center;
  width: 42px;
  height: 42px;
  margin-right: 4px;
}
.app > svg { width: 26px; height: 26px; }
.app.current {
  border: 1px solid #423230;
  border-radius: 4px;
  background: #382b2a;
}
.app.current::after,
.app.run::after {
  content: "";
  position: absolute;
  bottom: 0;
  left: 18px;
  width: 6px;
  height: 3px;
  border-radius: 2px;
  background: #a39b9a;
}
.app.current::after {
  left: 12px;
  width: 17px;
  background: #6cc5d3;
}
.badge {
  position: absolute;
  top: 3px;
  right: 2px;
  width: 16px;
  height: 16px;
  border-radius: 50%;
  background: #0f8793;
  font-size: 10px;
  line-height: 16px;
}
.badge.photo { background: #eee; }

.tray {
  flex: 1;
  display: flex;
  align-items: center;
  justify-content: flex-end;
  gap: 8px;
  padding-right: 21px;
}
.ic { width: 16px; height: 16px; }
.wifi { width: 18px; margin-left: 10px; }
.batt { width: 18px; }
.clock { margin-left: 9px; padding-bottom: 2px; line-height: 17px; text-align: right; }
.bell { height: 18px; }
```
